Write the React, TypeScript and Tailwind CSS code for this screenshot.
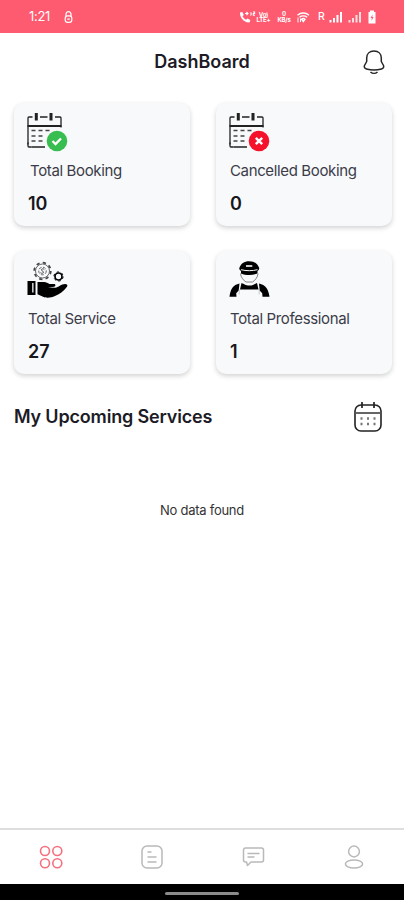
import type { ReactNode } from 'react'

function StatusBar() {
  return (
    <header className="flex h-[33px] items-center bg-[#ff5b70] pt-px text-white">
      <span className="ml-[29px] w-[35px] text-[13px] tracking-[-0.3px]">1:21</span>
      <svg width="9" height="13" viewBox="0 0 9 13" fill="none" stroke="currentColor" strokeWidth="1.2">
        <path d="M2 5V3.200a2.500 2.500 0 0 1 5 0V5" />
        <rect x="1.2" y="4.8" width="6.6" height="6.6" rx="2.4" />
        <path d="M3.2 8.1h2.6" />
      </svg>
      <div className="ml-auto flex items-center pr-[27px]">
        <svg width="17" height="13" viewBox="0 0 17 13" fill="currentColor">
          <path d="M1 1.500 3.300 1l1.500 3-1.300 1.300c.8 1.600 1.900 2.700 3.500 3.500L8.300 7.500l3 1.500-.5 2.300c-5.200.9-10.300-4.600-9.800-9.800Z" />
          <path d="M6 2.500h2.500M7.500 1 9 2.500 7.500 4M11.500 1.500c1 .7 1 2.300 0 3M14 1h1.600v1.500h-1.300v1.700H16" fill="none" stroke="currentColor" strokeWidth="1.100" />
        </svg>
        <span className="w-[15px] text-center text-[6px] font-bold leading-[5.500px] tracking-[-0.200px]">
          Vo)
          <br />
          LTE+
        </span>
        <span className="ml-[5px] w-[16px] text-center text-[6px] font-bold leading-[6px] tracking-[-0.200px]">
          0
          <br />
          KB/s
        </span>
        <svg className="ml-[4px]" width="14" height="13" viewBox="0 0 14 13" fill="none" stroke="currentColor" strokeWidth="1.400">
          <path d="M1.500 4.200c3.200-3 8.300-3 11.500 0M3.500 6.200c2.100-1.700 5.500-1.700 7.600 0M5.600 8.200c1-.8 2.400-.8 3.400 0L7.300 10.500Z" />
          <path d="M2 6.500v5M4.500 11V7.500" strokeWidth="1" />
        </svg>
        <span className="ml-[8px] w-[11px] text-[10.500px] font-medium">R</span>
        <Signal />
        <Signal className="ml-[5px] opacity-80" />
        <svg className="ml-[5px]" width="10" height="14" viewBox="0 0 10 14">
          <path d="M3 .5h4V2h1.500v11.500h-7V2H3Z" fill="currentColor" />
          <path d="M5.600 4.500 3.500 8h1.300l-.4 3L6.600 7H5.300Z" fill="#ff5b70" />
        </svg>
      </div>
    </header>
  )
}

function Signal({ className }: { className?: string }) {
  return (
    <svg className={className} width="14" height="12" viewBox="0 0 14 12" fill="currentColor">
      <path d="M.5 9h2v2.500h-2zM4 7h2v4.500H4zM7.500 4h2v7.500h-2zM11 1h2v10.500h-2z" />
    </svg>
  )
}

// Calendar with a status badge on its lower right corner
function BookingIcon({ cancelled = false }: { cancelled?: boolean }) {
  return (
    <svg width="42" height="42" viewBox="0.5 -0.5 42 42" fill="none" stroke="#222">
      <path d="M1.500 33V6.500q0-1 1-1H6M13.500 5.500h7.500M28.500 5.500h5q1 0 1 1V16M5 35.500h13.500" strokeWidth="1.300" />
      <path d="M1.500 31v3.500q0 1 1 1H5" strokeWidth="1.300" />
      <path d="M9.800 1.500V9M24.500 1.500V9" strokeWidth="3" />
      <path d="M1 14.500h34" strokeWidth="2.200" />
      <path d="M5 19h4m3 0h4m3 0h4M5 24.500h4m3 0h4M5 29.500h4m3 0h4" stroke="#444" strokeWidth="1.600" />
      <circle cx="30.500" cy="29.500" r="10.300" fill={cancelled ? '#f5132b' : '#38bd50'} stroke="none" />
      {cancelled ? (
        <path d="m27.300 26.300 6.400 6.400m0-6.400-6.400 6.400" stroke="white" strokeWidth="2.400" />
      ) : (
        <path d="m26 29.500 3 3 5.500-5.500" stroke="white" strokeWidth="2.300" />
      )}
    </svg>
  )
}

function ServiceIcon() {
  return (
    <svg width="42" height="42" viewBox="0 -1.5 42 42">
      <g fill="none" stroke="#444">
        <circle cx="15.500" cy="10.500" r="8.300" strokeWidth="1.700" strokeDasharray="3.260 3.259" />
        <circle cx="15.500" cy="10.500" r="7" strokeWidth=".8" />
        <circle cx="15.500" cy="10.500" r="3.800" strokeWidth=".8" strokeDasharray="3 1.500" />
        <path d="M17.300 9c-2-1.800-4.200.5-1.800 1.600s0 3.200-2 1.600" strokeWidth="1" />
      </g>
      <circle cx="31.500" cy="16" r="3.500" fill="none" stroke="black" strokeWidth="1.700" />
      <circle cx="31.500" cy="16" r="4.600" fill="none" stroke="black" strokeWidth="1" strokeDasharray="2.410 2.408" />
      <path d="M.5 20.500H8.500v14H.5Z" fill="black" />
      <path d="M5.200 22.500h1.300v9.500H5.200Z" fill="#f7f9fa" />
      <path d="M10.500 21.500h6.500c2.500 0 3.500 1 5.500 2h4.500c1.800 0 2 2.500 0 2.800l-6 .7 7.500.3c2.500-.3 6-3.800 9.500-3.800 2 0 3 1 2 2.700C37 30.500 32 34 28 35.600c-4 1.700-9 2.300-12.500.4l-5-2.200Z" fill="black" />
    </svg>
  )
}

function ProfessionalIcon() {
  return (
    <svg width="42" height="42" viewBox="0 -1.5 42 42">
      <path d="M10.500 7C12 3 15 .7 20.200.7s8.300 2.300 9.800 6.300c.7 1.800-.5 3-1.500 3.500v2.500c-5 2-11.500 2-16.500 0v-2.500c-1-.5-2.200-1.700-1.500-3.500Z" fill="black" />
      <path d="M12 9.200c5 1.300 11.500 1.300 16.500 0" fill="none" stroke="#f7f9fa" strokeWidth="1" />
      <path d="M17 4.700h6.300v1.600H17z" fill="#f7f9fa" />
      <path d="M11.500 13c0 3.500 3.500 7.500 5.500 8.500h6.500c2-1 5.500-5 5.500-8.500" fill="none" stroke="#777" strokeWidth=".9" />
      <path d="M12.500 22.500c3 1 4 2.500 7.700 2.500s4.800-1.500 7.800-2.500l1.500 6.500H11Z" fill="black" />
      <path d="M10.500 23C4 24.500 1.500 28.500.5 36.300h7l-.3-3.500 2.500-2.800ZM30 23c6.500 1.500 9.500 5.500 10.500 13.300h-7l-.3-3.500-2.500-2.800Z" fill="black" />
      <path d="M10.200 29v5m20-5v5" stroke="#aaa" strokeWidth=".6" />
    </svg>
  )
}

type CardProps = {
  icon: ReactNode
  label: string
  value: number
  indent?: boolean
}

function StatCard({ icon, label, value, indent }: CardProps) {
  return (
    <div className="h-[123px] rounded-[10px] bg-[#f7f9fb] pl-[13px] pt-[8px] shadow-[0_2px_5px_rgba(0,0,0,0.18)]">
      {icon}
      <p className={`mt-[8px] whitespace-nowrap text-[15px] leading-[20px] tracking-[-0.36px] text-[#3c3c48] ${indent ? 'pl-[3px]' : 'pl-px'}`}>{label}</p>
      <p className="mt-[11px] pl-px text-[18px] font-semibold leading-[24px] text-[#17171c]">{value}</p>
    </div>
  )
}

function BottomNav() {
  return (
    <nav className="flex h-[56px] items-center justify-between border-t-2 border-[#dedede] pl-[38px] pr-[37px] text-[#b9b9b9]">
      <svg width="26" height="26" viewBox="0 0 26 26" fill="none" stroke="#f5707f" strokeWidth="1.600">
        <circle cx="7" cy="7" r="4.500" />
        <circle cx="19.300" cy="7" r="4.500" />
        <circle cx="7" cy="19.200" r="4.500" />
        <circle cx="19.300" cy="19.200" r="4.500" />
      </svg>
      <svg width="26" height="26" viewBox="0 0 26 26" fill="none" stroke="currentColor" strokeWidth="1.500">
        <rect x="3" y="2" width="20" height="22" rx="5" />
        <path d="M8.500 8h4M8.500 13h9M8.500 18h9" />
      </svg>
      <svg width="26" height="26" viewBox="0 0 26 26" fill="none" stroke="currentColor" strokeWidth="1.500" strokeLinejoin="round">
        <path d="M5.500 4h16a2 2 0 0 1 2 2v10a2 2 0 0 1-2 2H11l-3.500 3.500L6.500 18h-1a2 2 0 0 1-2-2V6a2 2 0 0 1 2-2Z" />
        <path d="M7.500 9.500h12M7.500 13h7" />
      </svg>
      <svg width="26" height="26" viewBox="0 0 26 26" fill="none" stroke="currentColor" strokeWidth="1.500">
        <circle cx="13" cy="7.500" r="5.400" />
        <ellipse cx="13" cy="20" rx="8.600" ry="4" />
      </svg>
    </nav>
  )
}

export default function App() {
  return (
    <div className="flex h-[900px] w-[404px] flex-col overflow-hidden bg-white font-['Inter',sans-serif]">
      <StatusBar />

      <div className="grid h-[57px] grid-cols-[1fr_auto_1fr] items-center">
        <h1 className="col-start-2 text-[18px] font-semibold text-[#1c1b26]">DashBoard</h1>
        <svg className="mr-[18px] justify-self-end" width="24" height="28" viewBox="0 0 24 28" fill="none" stroke="#252525" strokeWidth="1.500" strokeLinejoin="round">
          <path d="M12 3c-4.500 0-7.300 3-7.300 7v3.500L2.500 17.500c-.7 1.700.2 3 2 3.500 5 1.300 10 1.300 15 0 1.800-.5 2.700-1.800 2-3.500l-2.200-4V10c0-4-2.800-7-7.300-7Z" />
          <path d="M8.500 24c2 1.800 5 1.800 7 0" />
        </svg>
      </div>

      <main className="flex-1">
        <div className="grid grid-cols-2 gap-x-[26px] gap-y-[25px] pl-[14px] pr-[12px] pt-[13px]">
          <StatCard icon={<BookingIcon />} label="Total Booking" value={10} indent />
          <StatCard icon={<BookingIcon cancelled />} label="Cancelled Booking" value={0} />
          <StatCard icon={<ServiceIcon />} label="Total Service" value={27} />
          <StatCard icon={<ProfessionalIcon />} label="Total Professional" value={1} />
        </div>

        <div className="mt-[26px] flex h-[34px] items-center justify-between pl-[14px] pr-[21px]">
          <h2 className="pb-[2px] text-[18px] font-semibold tracking-[-0.17px] text-[#1c1b26]">My Upcoming Services</h2>
          <svg width="30" height="32" viewBox="0 0 30 32" fill="none" stroke="#222">
            <rect x="2" y="4" width="26" height="26" rx="6" strokeWidth="1.600" />
            <path d="M9 1v6M21 1v6" strokeWidth="1.700" />
            <path d="M2 12h26" stroke="#555" strokeWidth="1.800" />
            <path d="M7.500 17.500h2m4.500 0h2m4.500 0h2M7.500 23h2m4.500 0h2m4.500 0h2" stroke="#777" strokeWidth="2.400" />
          </svg>
        </div>

        <p className="mt-[66px] text-center text-[13px] leading-[20px] tracking-[-0.26px] text-[#333]">No data found</p>
      </main>

      <BottomNav />
      <div className="flex h-[16px] items-center justify-center bg-black pt-[2px]">
        <div className="h-[3px] w-[74px] rounded-full bg-[#8b8b8b]" />
      </div>
    </div>
  )
}
